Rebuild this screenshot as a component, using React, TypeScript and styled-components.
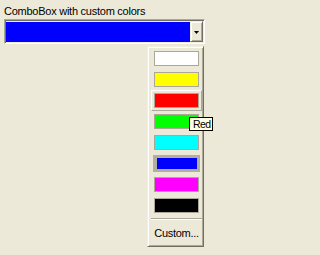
import { FC } from 'react';
import styled, { createGlobalStyle, css } from 'styled-components';

type ItemState = 'normal' | 'hot' | 'checked';

const colors: { name: string; value: string; state: ItemState }[] = [
	{ name: 'White', value: '#ffffff', state: 'normal' },
	{ name: 'Yellow', value: '#ffff00', state: 'normal' },
	{ name: 'Red', value: '#ff0000', state: 'hot' },
	{ name: 'Lime', value: '#00ff00', state: 'normal' },
	{ name: 'Aqua', value: '#00ffff', state: 'normal' },
	{ name: 'Blue', value: '#0000ff', state: 'checked' },
	{ name: 'Fuchsia', value: '#ff00ff', state: 'normal' },
	{ name: 'Black', value: '#000000', state: 'normal' },
];

const App: FC = () => {
	return (
		<Page>
			<GlobalStyle />
			<Label>ComboBox with custom colors</Label>
			<ComboWrap>
				<Combo>
					<ComboValue $color="#0000ff" />
					<DropButton>
						<svg width="5" height="3" viewBox="0 0 5 3">
							<path d="M0 0h5L2.5 3z" fill="#000" />
						</svg>
					</DropButton>
				</Combo>
				<Menu>
					{colors.map((c) => (
						<Item key={c.name} $state={c.state}>
							<Swatch $color={c.value} $checked={c.state === 'checked'} />
						</Item>
					))}
					<Separator />
					<CustomItem>Custom...</CustomItem>
				</Menu>
			</ComboWrap>
			<Tooltip>Red</Tooltip>
		</Page>
	);
};

const GlobalStyle = createGlobalStyle`
	html, body {
		margin: 0;
		padding: 0;
		background: #ece9d8;
	}
	body {
		font-family: 'Liberation Sans', Arial, sans-serif;
		font-size: 11px;
		color: #000;
	}
`;

const Page = styled.div`
	position: relative;
	width: 224px;
	height: 255px;
	padding: 5px 0 0 4px;
	box-sizing: border-box;
	background: #ece9d8;
`;

const Label = styled.div`
	line-height: 13px;
	letter-spacing: -0.25px;
	white-space: nowrap;
`;

const ComboWrap = styled.div`
	position: relative;
	width: 201px;
	margin-top: 1px;
`;

const Combo = styled.div`
	display: flex;
	height: 25px;
	box-sizing: border-box;
	border-style: solid;
	border-width: 1px;
	border-color: #aca899 #ffffff #ffffff #aca899;
	box-shadow: inset 1px 1px 0 #716f64, inset -1px -1px 0 #f1efe2;
	padding: 1px;
`;

const ComboValue = styled.div<{ $color: string }>`
	flex: 1;
	background: ${(p) => p.$color};
	margin-top: 1px;
`;

const DropButton = styled.div`
	display: flex;
	align-items: center;
	justify-content: center;
	width: 13px;
	box-sizing: border-box;
	background: #ece9d8;
	border-style: solid;
	border-width: 1px;
	border-color: #f1efe2 #716f64 #716f64 #f1efe2;
	box-shadow: inset 1px 1px 0 #ffffff, inset -1px -1px 0 #aca899;
	padding-top: 1px;
`;

const Menu = styled.div`
	position: absolute;
	top: calc(100% + 2px);
	right: 1px;
	width: 57px;
	height: 201px;
	box-sizing: border-box;
	display: flex;
	flex-direction: column;
	background: #ece9d8;
	border-style: solid;
	border-width: 1px;
	border-color: #f1efe2 #716f64 #716f64 #f1efe2;
	box-shadow: inset 1px 1px 0 #ffffff, inset -1px -1px 0 #aca899;
	padding: 1px 1px 1px 3px;
`;

const Item = styled.div<{ $state: ItemState }>`
	display: flex;
	align-items: center;
	justify-content: center;
	width: 51px;
	height: 21px;
	box-sizing: border-box;
	border: 1px solid transparent;
	${(p) =>
		p.$state === 'hot' &&
		css`
			border-color: #ffffff #aca899 #aca899 #ffffff;
		`}
`;

const Swatch = styled.div<{ $color: string; $checked: boolean }>`
	box-sizing: border-box;
	background: ${(p) => p.$color};
	${(p) =>
		p.$checked
			? css`
					width: 47px;
					height: 17px;
					border-style: solid;
					border-color: #b3afa0;
					border-width: 3px 3px 3px 4px;
			  `
			: css`
					width: 45px;
					height: 15px;
					border: 1px solid #aca899;
			  `}
`;

const Separator = styled.div`
	width: 51px;
	height: 2px;
	margin: 2px 0;
	border-top: 1px solid #aca899;
	border-bottom: 1px solid #ffffff;
	box-sizing: border-box;
`;

const CustomItem = styled.div`
	flex: 1;
	display: flex;
	align-items: center;
	justify-content: center;
	width: 51px;
	letter-spacing: -0.3px;
	padding-bottom: 1px;
`;

const Tooltip = styled.div`
	position: absolute;
	left: 189px;
	top: 117px;
	height: 14px;
	box-sizing: border-box;
	border: 1px solid #000;
	background: #ffffe1;
	font-size: 10.5px;
	line-height: 12px;
	padding: 0 2px 0 3px;
	letter-spacing: -0.6px;
	white-space: nowrap;
`;

export default App;
